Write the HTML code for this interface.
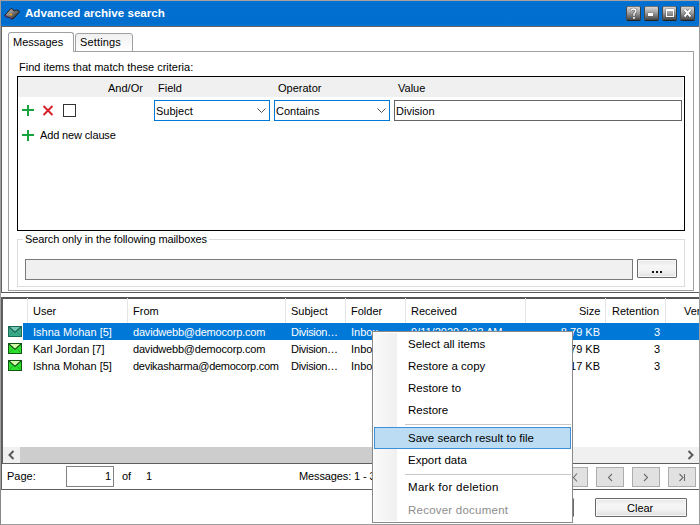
<!DOCTYPE html>
<html><head><meta charset="utf-8">
<style>
*{margin:0;padding:0;box-sizing:border-box}
html,body{width:700px;height:525px;overflow:hidden;background:#fff}
body{position:relative;font-family:"Liberation Sans",sans-serif;font-size:11px;color:#000}
.a{position:absolute}
.tb{top:6px;width:15px;height:15px;border-radius:2px;border:1px solid;border-color:#707070 #3c3c3c #222 #4a4a4a;background:linear-gradient(#d6d6d6,#9c9c9c 45%,#454545)}
.btn{border:1px solid #6a6a6a;border-radius:1px;background:linear-gradient(#e6e6e6,#f6f6f6 35%,#f2f2f2 65%,#dedede);box-shadow:inset 0 0 0 1px #f8f8f8}
.t{position:absolute;white-space:nowrap;line-height:13px}
</style></head><body>
<!-- window frame -->

<div class="a" style="left:1px;top:1px;width:698px;height:25px;background:linear-gradient(#0a74d6 0,#006fd0 2px,#006ecd 23px,#0876d8 24px,#0876d8)"></div>
<div class="a" style="left:1px;top:26px;width:698px;height:1px;background:#6a625c"></div>

<!-- title -->
<svg class="a" style="left:4px;top:7px" width="17" height="14" viewBox="0 0 17 14">
<defs><linearGradient id="bg" x1="0" y1="0" x2="1" y2="1"><stop offset="0" stop-color="#c8c8c8"/><stop offset="0.4" stop-color="#8a8a8a"/><stop offset="0.75" stop-color="#404040"/><stop offset="1" stop-color="#181818"/></linearGradient></defs>
<path d="M1 8L7 1.5L8.5 2L10 4L12 3L14.5 3.5L15.5 5L9.5 11.5L7.5 12L5.5 10.5L3 10L1 9Z" fill="url(#bg)" stroke="#1a120c" stroke-width="0.9"/>
<path d="M1.5 8.5L3.5 10" stroke="#5a2a7a" stroke-width="1.4"/>
<path d="M5.5 10.5L7.8 12" stroke="#5a2a7a" stroke-width="1.4"/>
<rect x="5.5" y="6.6" width="2.6" height="1.8" fill="#f0a010"/>
</svg>
<div class="t" style="left:25px;top:6px;color:#fff;font-weight:bold;font-size:11.6px">Advanced archive search</div>

<!-- title buttons -->
<div class="a tb" style="left:626px"></div>
<div class="a tb" style="left:644px"></div>
<div class="a tb" style="left:662px"></div>
<div class="a tb" style="left:680px"></div>
<svg class="a" style="left:626px;top:6px" width="15" height="15"><path d="M5 4.5Q5.5 3 7.5 3Q10 3 10 5Q10 6.5 8 7.5L8 10" stroke="#222" stroke-width="2.6" fill="none" opacity="0.5"/><path d="M5 4.5Q5.5 3 7.5 3Q10 3 10 5Q10 6.5 8 7.5L8 10" stroke="#fff" stroke-width="1.3" fill="none"/><rect x="7.2" y="11" width="1.6" height="1.8" fill="#fff"/></svg>
<div class="a" style="left:648px;top:13px;width:5px;height:3px;background:#fff;box-shadow:0 0 1px #222"></div>
<div class="a" style="left:666px;top:9px;width:8px;height:8px;border:1px solid #fff;border-top-width:2px;box-shadow:0 0 1px #222"></div>
<svg class="a" style="left:680px;top:6px" width="15" height="15"><path d="M4.5 3.5L10.5 10.5M10.5 3.5L4.5 10.5" stroke="#222" stroke-width="3.4" opacity="0.5"/><path d="M4.5 3.5L10.5 10.5M10.5 3.5L4.5 10.5" stroke="#fff" stroke-width="2"/></svg>

<!-- tabs -->
<div class="a" style="left:8px;top:32px;width:66px;height:20px;border:1px solid #a0a0a0;border-bottom:none;border-radius:3px 3px 0 0;background:#fff"></div>
<div class="t" style="left:13px;top:36px">Messages</div>
<div class="a" style="left:75px;top:33px;width:58px;height:19px;border:1px solid #a0a0a0;border-radius:3px 3px 0 0;background:linear-gradient(#f0f0f0,#fff)"></div>
<div class="t" style="left:80px;top:36px;letter-spacing:0.15px">Settings</div>
<!-- tab panel -->
<div class="a" style="left:8px;top:51px;width:686px;height:240px;border:1px solid #a0a0a0;border-top:none"></div>
<div class="a" style="left:74px;top:51px;width:620px;height:1px;background:#a0a0a0"></div>

<div class="t" style="left:19px;top:61px">Find items that match these criteria:</div>

<!-- criteria grid -->
<div class="a" style="left:17px;top:76px;width:668px;height:155px;border:1px solid #000"></div>
<div class="a" style="left:18px;top:77px;width:665px;height:20px;background:#f0f0f0"></div>
<div class="t" style="left:108px;top:82px">And/Or</div>
<div class="t" style="left:158px;top:82px">Field</div>
<div class="t" style="left:278px;top:82px">Operator</div>
<div class="t" style="left:398px;top:82px">Value</div>

<div class="a" style="left:22px;top:105px;width:11px;height:11px">
 <div class="a" style="left:0;top:4px;width:12px;height:2px;background:#19a33c"></div>
 <div class="a" style="left:5px;top:0;width:2px;height:11px;background:#19a33c"></div>
</div>
<svg class="a" style="left:42px;top:105px" width="12" height="11"><path d="M1.5 1L10.5 10M10.5 1L1.5 10" stroke="#d81f26" stroke-width="1.9"/></svg>
<div class="a" style="left:63px;top:104px;width:13px;height:13px;border:1px solid #333"></div>

<div class="a" style="left:154px;top:100px;width:116px;height:21px;border:1px solid #0078d7"></div>
<div class="t" style="left:156px;top:105px">Subject</div>
<svg class="a" style="left:257px;top:108px" width="9" height="6"><path d="M0.5 0.5L4.5 4.5L8.5 0.5" stroke="#505050" fill="none"/></svg>
<div class="a" style="left:274px;top:100px;width:116px;height:21px;border:1px solid #0078d7"></div>
<div class="t" style="left:276px;top:105px">Contains</div>
<svg class="a" style="left:377px;top:108px" width="9" height="6"><path d="M0.5 0.5L4.5 4.5L8.5 0.5" stroke="#505050" fill="none"/></svg>
<div class="a" style="left:394px;top:100px;width:288px;height:21px;border:1px solid #646464"></div>
<div class="t" style="left:396px;top:105px">Division</div>

<div class="a" style="left:22px;top:130px;width:11px;height:11px">
 <div class="a" style="left:0;top:4px;width:12px;height:2px;background:#19a33c"></div>
 <div class="a" style="left:5px;top:0;width:2px;height:11px;background:#19a33c"></div>
</div>
<div class="t" style="left:40px;top:129px;letter-spacing:-0.14px">Add new clause</div>

<!-- groupbox -->
<div class="a" style="left:17px;top:239px;width:668px;height:48px;border:1px solid #dcdcdc"></div>
<div class="t" style="left:23px;top:233px;background:#fff;padding:0 2px;letter-spacing:-0.12px">Search only in the following mailboxes</div>
<div class="a" style="left:25px;top:259px;width:608px;height:21px;border:1px solid #7a7a7a;background:#f0f0f0"></div>
<div class="a btn" style="left:637px;top:259px;width:40px;height:19px"></div>
<div class="a" style="left:652px;top:271px;width:2px;height:2px;background:#111"></div><div class="a" style="left:656px;top:271px;width:2px;height:2px;background:#111"></div><div class="a" style="left:660px;top:271px;width:2px;height:2px;background:#111"></div>

<!-- splitter / panels -->
<div class="a" style="left:0;top:27px;width:1px;height:462px;background:#a0a0a0"></div>
<div class="a" style="left:0;top:489px;width:1px;height:36px;background:#888"></div>
<div class="a" style="left:1px;top:27px;width:1px;height:266px;background:#646464"></div>
<div class="a" style="left:1px;top:292px;width:698px;height:1px;background:#5a5a5a"></div>
<div class="a" style="left:1px;top:297px;width:698px;height:2px;background:#555"></div>
<div class="a" style="left:1px;top:297px;width:2px;height:166px;background:#5e5e5e"></div>
<div class="a" style="left:1px;top:463px;width:1px;height:27px;background:#5e5e5e"></div>

<!-- list header -->
<div class="a" style="left:27px;top:298px;width:1px;height:25px;background:#e5e5e5"></div>
<div class="a" style="left:127px;top:298px;width:1px;height:25px;background:#e5e5e5"></div>
<div class="a" style="left:285px;top:298px;width:1px;height:25px;background:#e5e5e5"></div>
<div class="a" style="left:345px;top:298px;width:1px;height:25px;background:#e5e5e5"></div>
<div class="a" style="left:405px;top:298px;width:1px;height:25px;background:#e5e5e5"></div>
<div class="a" style="left:525px;top:298px;width:1px;height:25px;background:#e5e5e5"></div>
<div class="a" style="left:605px;top:298px;width:1px;height:25px;background:#e5e5e5"></div>
<div class="a" style="left:665px;top:298px;width:1px;height:25px;background:#e5e5e5"></div>
<div class="t" style="left:33px;top:305px">User</div>
<div class="t" style="left:133px;top:305px">From</div>
<div class="t" style="left:291px;top:305px">Subject</div>
<div class="t" style="left:351px;top:305px">Folder</div>
<div class="t" style="left:411px;top:305px">Received</div>
<div class="t" style="left:579px;top:305px">Size</div>
<div class="t" style="left:612px;top:305px">Retention</div>
<div class="t" style="left:684px;top:305px">Ver</div>

<!-- rows -->
<div class="a" style="left:23px;top:323px;width:676px;height:17px;background:#0078d7"></div>
<svg class="a" style="left:8px;top:326px" width="14" height="11" viewBox="0 0 14 11"><rect x="0.5" y="0.5" width="13" height="10" fill="#3aaa88" stroke="#1a6a55"/><path d="M1 1L7 6L13 1Z" fill="#72c4b4"/><path d="M1 1L7 6.3L13 1" stroke="#1a5e4c" stroke-width="1.1" fill="none"/><path d="M1.5 9.5L4.5 6.5M12.5 9.5L9.5 6.5" stroke="#2a8a70" stroke-width="0.8"/></svg>
<svg class="a" style="left:8px;top:343px" width="14" height="11" viewBox="0 0 14 11"><rect x="0.5" y="0.5" width="13" height="10" fill="#2ee02e" stroke="#125812"/><path d="M1 1L7 6L13 1Z" fill="#d0fca8"/><path d="M1 1L7 6.3L13 1" stroke="#104810" stroke-width="1.1" fill="none"/><path d="M1.5 9.5L4.5 6.5M12.5 9.5L9.5 6.5" stroke="#1a9a1a" stroke-width="0.8"/></svg>
<svg class="a" style="left:8px;top:360px" width="14" height="11" viewBox="0 0 14 11"><rect x="0.5" y="0.5" width="13" height="10" fill="#2ee02e" stroke="#125812"/><path d="M1 1L7 6L13 1Z" fill="#d0fca8"/><path d="M1 1L7 6.3L13 1" stroke="#104810" stroke-width="1.1" fill="none"/><path d="M1.5 9.5L4.5 6.5M12.5 9.5L9.5 6.5" stroke="#1a9a1a" stroke-width="0.8"/></svg>
<div class="t" style="left:33px;top:326px;color:#fff">Ishna Mohan [5]</div>
<div class="t" style="left:133px;top:326px;letter-spacing:-0.2px;color:#fff">davidwebb@democorp.com</div>
<div class="t" style="left:291px;top:326px;letter-spacing:-0.3px;color:#fff">Division…</div>
<div class="t" style="left:351px;top:326px;color:#fff">Inbox</div>
<div class="t" style="left:411px;top:326px;color:#fff">9/11/2020 2:33 AM</div>
<div class="t" style="left:520px;top:326px;width:80px;text-align:right;color:#fff">8.79 KB</div>
<div class="t" style="left:600px;top:326px;width:60px;text-align:right;color:#fff">3</div>
<div class="t" style="left:33px;top:343px">Karl Jordan [7]</div>
<div class="t" style="left:133px;top:343px;letter-spacing:-0.2px">davidwebb@democorp.com</div>
<div class="t" style="left:291px;top:343px;letter-spacing:-0.3px">Division…</div>
<div class="t" style="left:351px;top:343px">Inbox</div>
<div class="t" style="left:520px;top:343px;width:80px;text-align:right">8.79 KB</div>
<div class="t" style="left:600px;top:343px;width:60px;text-align:right">3</div>
<div class="t" style="left:33px;top:360px">Ishna Mohan [5]</div>
<div class="t" style="left:133px;top:360px;letter-spacing:-0.27px">devikasharma@democorp.com</div>
<div class="t" style="left:291px;top:360px;letter-spacing:-0.3px">Division…</div>
<div class="t" style="left:351px;top:360px">Inbox</div>
<div class="t" style="left:520px;top:360px;width:80px;text-align:right">9.17 KB</div>
<div class="t" style="left:600px;top:360px;width:60px;text-align:right">3</div>

<!-- h scrollbar -->
<div class="a" style="left:3px;top:447px;width:696px;height:16px;background:#f0f0f0"></div>
<div class="a" style="left:20px;top:447px;width:430px;height:16px;background:#cdcdcd"></div>
<svg class="a" style="left:7px;top:450px" width="9" height="10"><path d="M6.5 1L2.5 5L6.5 9" stroke="#5a5a5a" stroke-width="2" fill="none"/></svg>
<svg class="a" style="left:687px;top:450px" width="9" height="10"><path d="M1.5 1L5.5 5L1.5 9" stroke="#5a5a5a" stroke-width="2" fill="none"/></svg>

<!-- pager -->
<div class="a" style="left:1px;top:463px;width:698px;height:1px;background:#5e5e5e"></div>
<div class="a" style="left:1px;top:489px;width:698px;height:1px;background:#5e5e5e"></div>
<div class="t" style="left:7px;top:470px">Page:</div>
<div class="a" style="left:66px;top:466px;width:48px;height:21px;border:1px solid #828282"></div>
<div class="t" style="left:105px;top:470px">1</div>
<div class="t" style="left:122px;top:470px">of</div>
<div class="t" style="left:146px;top:470px">1</div>
<div class="t" style="left:299px;top:470px;letter-spacing:-0.12px">Messages: 1 - 3 of 3</div>
<div class="a" style="left:560px;top:467px;width:28px;height:20px;border:1px solid #adadad;background:#e1e1e1"></div>
<div class="a" style="left:596px;top:467px;width:28px;height:20px;border:1px solid #adadad;background:#e1e1e1"></div>
<div class="a" style="left:632px;top:467px;width:28px;height:20px;border:1px solid #adadad;background:#e1e1e1"></div>
<div class="a" style="left:668px;top:467px;width:28px;height:20px;border:1px solid #adadad;background:#e1e1e1"></div>
<svg class="a" style="left:560px;top:467px" width="136" height="20">
<g stroke="#6d6d6d" stroke-width="1.1" fill="none">
<path d="M17 6.5L13.5 10.5L17 14.5M11.5 6.5V14.5"/>
<path d="M52 7L48.5 10.5L52 14"/>
<path d="M84 7L87.5 10.5L84 14"/>
<path d="M119.5 7L123 10.5L119.5 14M124.5 7V14"/>
</g></svg>

<!-- bottom buttons -->
<div class="a btn" style="left:480px;top:498px;width:94px;height:19px"></div>
<div class="a btn" style="left:595px;top:498px;width:92px;height:19px"></div>
<div class="t" style="left:627px;top:502px">Clear</div>

<!-- context menu -->
<div class="a" style="left:372px;top:331px;width:201px;height:192px;border:1px solid #8a8a8a;background:#fff;font-size:11.5px">
 <div class="a" style="left:1px;top:1px;width:23px;height:188px;background:linear-gradient(90deg,#fafafa,#f0f0f0)"></div>
 <div class="t" style="left:35px;top:6px">Select all items</div>
 <div class="t" style="left:35px;top:28px">Restore a copy</div>
 <div class="t" style="left:35px;top:50px">Restore to</div>
 <div class="t" style="left:35px;top:72px">Restore</div>
 <div class="a" style="left:32px;top:92px;width:166px;height:1px;background:#c8c8c8"></div>
 <div class="a" style="left:1px;top:95px;width:197px;height:22px;background:#bcdcf4;border:1px solid #3d8fd8"></div>
 <div class="t" style="left:35px;top:100px">Save search result to file</div>
 <div class="t" style="left:35px;top:122px">Export data</div>
 <div class="a" style="left:32px;top:142px;width:166px;height:1px;background:#c8c8c8"></div>
 <div class="t" style="left:35px;top:149px;letter-spacing:0.3px">Mark for deletion</div>
 <div class="t" style="left:35px;top:172px;color:#8d8d8d;letter-spacing:0.23px">Recover document</div>
</div>
<div class="a" style="left:0;top:0;width:700px;height:525px;border:1px solid #9c9c9c;border-top-color:#aa9f9a;border-left-color:transparent"></div>
<div class="a" style="left:0;top:0;width:1px;height:27px;background:#a49c98"></div>
</body></html>
